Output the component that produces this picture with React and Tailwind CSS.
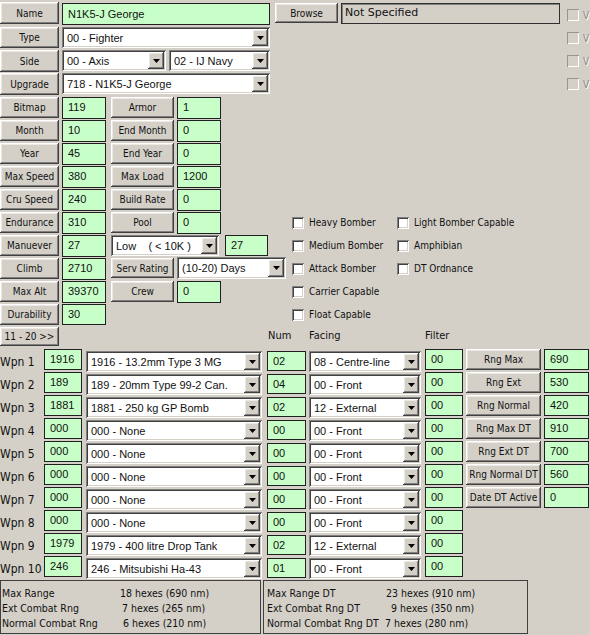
const RAISED =
  'bg-[#d4d0c8] shadow-[inset_-1px_-1px_0_#404040,inset_1px_1px_0_#ffffff,inset_-2px_-2px_0_#808080,inset_2px_2px_0_#ece9e2]';
const SUNKEN =
  'shadow-[inset_1px_1px_0_#808080,inset_-1px_-1px_0_#ffffff,inset_2px_2px_0_#404040,inset_-2px_-2px_0_#d4d0c8]';

const weapons = [
  ['1916', '1916 - 13.2mm Type 3 MG', '02', '08 - Centre-line'],
  ['189', '189 - 20mm Type 99-2 Can.', '04', '00 - Front'],
  ['1881', '1881 - 250 kg GP Bomb', '02', '12 - External'],
  ['000', '000 - None', '00', '00 - Front'],
  ['000', '000 - None', '00', '00 - Front'],
  ['000', '000 - None', '00', '00 - Front'],
  ['000', '000 - None', '00', '00 - Front'],
  ['000', '000 - None', '00', '00 - Front'],
  ['1979', '1979 - 400 litre Drop Tank', '02', '12 - External'],
  ['246', '246 - Mitsubishi Ha-43', '01', '00 - Front'],
];

const ranges = [
  ['Rng Max', '690'],
  ['Rng Ext', '530'],
  ['Rng Normal', '420'],
  ['Rng Max DT', '910'],
  ['Rng Ext DT', '700'],
  ['Rng Normal DT', '560'],
  ['Date DT Active', '0'],
];

const stats = [
  ['Bitmap', '119', 'Armor', '1'],
  ['Month', '10', 'End Month', '0'],
  ['Year', '45', 'End Year', '0'],
  ['Max Speed', '380', 'Max Load', '1200'],
  ['Cru Speed', '240', 'Build Rate', '0'],
];

function Btn({ className = '', children }) {
  return (
    <div className={`flex shrink-0 items-center justify-center whitespace-nowrap ${RAISED} ${className}`}>
      {children}
    </div>
  );
}

function Field({ className = '', children }) {
  return (
    <div
      className={`shrink-0 border border-[#202020] bg-[#c8ffc8] pl-[5px] pt-[2px] font-['Liberation_Sans',sans-serif] text-[11px] leading-[14px] ${className}`}
    >
      {children}
    </div>
  );
}

function Drop({ className = '', children }) {
  return (
    <div className={`flex shrink-0 bg-white p-[2px] ${SUNKEN} ${className}`}>
      <span className="flex-1 self-center overflow-hidden whitespace-pre pl-[3px] font-['Liberation_Sans',sans-serif] text-[11px] leading-[14px]">
        {children}
      </span>
      <span className={`flex w-[16px] items-center justify-center ${RAISED}`}>
        <svg width="7" height="4" viewBox="0 0 7 4">
          <path d="M0 0h7L3.5 4z" fill="#000" />
        </svg>
      </span>
    </div>
  );
}

function Check({ label, className = '' }) {
  return (
    <div className={`flex items-center ${className}`}>
      <span className={`h-[12px] w-[12px] shrink-0 bg-white ${SUNKEN}`} />
      <span className="ml-[5px] whitespace-nowrap">{label}</span>
    </div>
  );
}

function Info({ rows, className = '' }) {
  return (
    <div
      className={`h-[54px] shrink-0 border border-[#404040] pt-[5px] font-['DejaVu_Sans_Condensed','DejaVu_Sans',sans-serif] text-[10.5px] ${className}`}
    >
      {rows.map(([label, value, pad]) => (
        <div key={label} className="flex h-[15px] items-center whitespace-nowrap">
          <span className="w-[118px] shrink-0">{label}</span>
          <span className={pad}>{value}</span>
        </div>
      ))}
    </div>
  );
}

export default function App() {
  return (
    <div className="h-[635px] w-[590px] overflow-hidden bg-[#d4d0c8] font-['DejaVu_Sans_Condensed','DejaVu_Sans',sans-serif] text-[10px] text-[#111]">
      {/* identity rows with the greyed options on the right */}
      <div className="flex pt-[3px]">
        <div className="flex w-[567px] shrink-0 flex-col">
          <div className="flex h-[22px]">
            <Btn className="-mt-px h-[22px] w-[59px]">Name</Btn>
            <Field className="ml-[3px] h-[22px] w-[208px] pt-[3px]">N1K5-J George</Field>
            <Btn className="ml-[5px] h-[20px] w-[63px]">Browse</Btn>
            <div className="ml-[3px] flex h-[21px] w-[219px] items-center border border-[#303030] pl-[3px] font-['DejaVu_Sans',sans-serif] text-[11px] shadow-[inset_1px_1px_0_#808080]">
              Not Specified
            </div>
          </div>
          <div className="mt-[2px] flex h-[21px]">
            <Btn className="h-[21px] w-[59px]">Type</Btn>
            <Drop className="ml-[3px] h-[21px] w-[208px]">00 - Fighter</Drop>
          </div>
          <div className="mt-[2px] flex h-[21px]">
            <Btn className="h-[22px] w-[59px]">Side</Btn>
            <Drop className="ml-[3px] h-[21px] w-[104px]">00 - Axis</Drop>
            <Drop className="ml-[3px] h-[21px] w-[101px]">02 - IJ Navy</Drop>
          </div>
          <div className="mt-[2px] flex h-[22px]">
            <Btn className="h-[22px] w-[59px]">Upgrade</Btn>
            <Drop className="ml-[3px] h-[21px] w-[208px]">718 - N1K5-J George</Drop>
          </div>
        </div>
        <div className="flex flex-col gap-[11px] pt-[6px] text-[#8a8780]">
          {[0, 1, 2, 3].map((i) => (
            <div key={i} className="flex h-[12px] items-center">
              <span className="h-[12px] w-[12px] shrink-0 shadow-[inset_1px_1px_0_#9a968e,inset_-1px_-1px_0_#ffffff]" />
              <span className="ml-[4px] [text-shadow:1px_1px_0_#ffffff]">V</span>
            </div>
          ))}
        </div>
      </div>

      {/* performance values */}
      <div className="flex flex-col">
        {stats.map(([a, av, b, bv]) => (
          <div key={a} className="mt-[2px] flex h-[21px]">
            <Btn className="h-[21px] w-[59px]">{a}</Btn>
            <Field className="ml-[3px] h-[22px] w-[44px]">{av}</Field>
            <Btn className="ml-[5px] h-[21px] w-[63px]">{b}</Btn>
            <Field className="ml-[3px] h-[22px] w-[44px]">{bv}</Field>
          </div>
        ))}

        <div className="mt-[2px] flex h-[21px]">
          <div className="flex w-[292px] shrink-0">
            <Btn className="h-[21px] w-[59px]">Endurance</Btn>
            <Field className="ml-[3px] h-[22px] w-[44px]">310</Field>
            <Btn className="ml-[5px] h-[21px] w-[63px]">Pool</Btn>
            <Field className="ml-[3px] h-[22px] w-[44px]">0</Field>
          </div>
          <Check className="w-[105px]" label="Heavy Bomber" />
          <Check label="Light Bomber Capable" />
        </div>

        <div className="mt-[2px] flex h-[21px]">
          <div className="flex w-[292px] shrink-0">
            <Btn className="h-[21px] w-[59px]">Manuever</Btn>
            <Field className="ml-[3px] h-[22px] w-[44px]">27</Field>
            <Drop className="ml-[5px] h-[21px] w-[108px]">{'Low    ( < 10K )'}</Drop>
            <Field className="ml-[6px] h-[21px] w-[43px]">27</Field>
          </div>
          <Check className="w-[105px]" label="Medium Bomber" />
          <Check label="Amphibian" />
        </div>

        <div className="mt-[2px] flex h-[21px]">
          <div className="flex w-[292px] shrink-0">
            <Btn className="h-[21px] w-[59px]">Climb</Btn>
            <Field className="ml-[3px] h-[22px] w-[44px]">2710</Field>
            <Btn className="ml-[5px] h-[20px] w-[63px]">Serv Rating</Btn>
            <Drop className="ml-[3px] -mt-px h-[22px] w-[109px]">(10-20) Days</Drop>
          </div>
          <Check className="w-[105px]" label="Attack Bomber" />
          <Check label="DT Ordnance" />
        </div>

        <div className="mt-[2px] flex h-[21px]">
          <div className="flex w-[292px] shrink-0">
            <Btn className="h-[21px] w-[59px]">Max Alt</Btn>
            <Field className="ml-[3px] h-[22px] w-[44px]">39370</Field>
            <Btn className="ml-[5px] h-[21px] w-[63px]">Crew</Btn>
            <Field className="ml-[3px] h-[22px] w-[44px]">0</Field>
          </div>
          <Check label="Carrier Capable" />
        </div>

        <div className="mt-[2px] flex h-[21px]">
          <div className="flex w-[292px] shrink-0">
            <Btn className="h-[21px] w-[59px]">Durability</Btn>
            <Field className="ml-[3px] h-[21px] w-[44px]">30</Field>
          </div>
          <Check label="Float Capable" />
        </div>

        <div className="mt-[2px] flex h-[19px] items-center text-[11px]">
          <Btn className="h-[19px] w-[59px] text-[10px]">{'11 - 20 >>'}</Btn>
          <span className="ml-[209px] w-[41px]">Num</span>
          <span className="w-[116px]">Facing</span>
          <span>Filter</span>
        </div>
      </div>

      {/* weapon slots */}
      <div className="mt-[3px] flex flex-col gap-[2px]">
        {weapons.map(([id, name, num, facing], i) => (
          <div key={i} className="flex h-[21px]">
            <span className="w-[44px] shrink-0 pt-[6px] text-[12px] leading-[14px]">Wpn {i + 1}</span>
            <Field className="h-[21px] w-[38px]">{id}</Field>
            <Drop className="ml-[4px] mt-[2px] h-[21px] w-[176px]">{name}</Drop>
            <Field className="ml-[5px] mt-[2px] h-[20px] w-[39px]">{num}</Field>
            <Drop className="ml-[3px] mt-[2px] h-[21px] w-[112px]">{facing}</Drop>
            <Field className="ml-[4px] h-[21px] w-[38px]">00</Field>
            {ranges[i] && (
              <>
                <Btn className="ml-[3px] h-[21px] w-[75px]">{ranges[i][0]}</Btn>
                <Field className="ml-[3px] h-[21px] w-[45px]">{ranges[i][1]}</Field>
              </>
            )}
          </div>
        ))}
      </div>

      {/* range summary */}
      <div className="mt-[3px] flex">
        <Info
          className="w-[261px] pl-px"
          rows={[
            ['Max Range', '18 hexes (690 nm)', 'pl-0'],
            ['Ext Combat Rng', '7 hexes (265 nm)', 'pl-[2px]'],
            ['Normal Combat Rng', '6 hexes (210 nm)', 'pl-[3px]'],
          ]}
        />
        <Info
          className="ml-[2px] w-[265px] pl-[3px]"
          rows={[
            ['Max Range DT', '23 hexes (910 nm)', 'pl-px'],
            ['Ext Combat Rng DT', '9 hexes (350 nm)', 'pl-[6px]'],
            ['Normal Combat Rng DT', '7 hexes (280 nm)', 'pl-0'],
          ]}
        />
      </div>
    </div>
  );
}
